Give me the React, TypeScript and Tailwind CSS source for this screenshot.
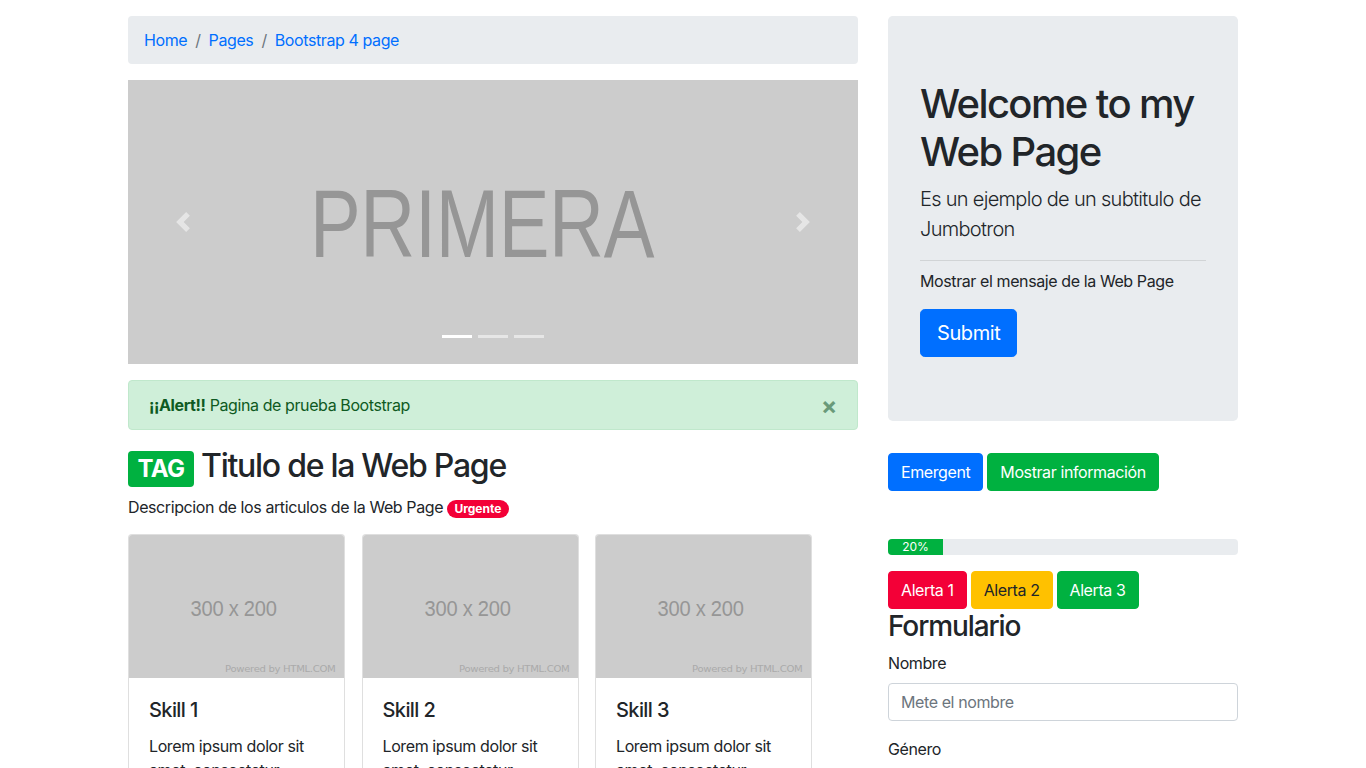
import React from 'react';

const PlaceholderImg = () => (
  <svg viewBox="0 0 300 200" preserveAspectRatio="none" className="block w-[215px] h-[143px]">
    <rect width="300" height="200" fill="#cccccc" />
    <text
      x="146"
      y="113"
      textAnchor="middle"
      fontFamily="'Liberation Sans', Arial, sans-serif"
      fontSize="31"
      fill="#969696"
      textLength="120"
      lengthAdjust="spacingAndGlyphs"
    >
      300 x 200
    </text>
    <text
      x="288"
      y="191"
      textAnchor="end"
      fontFamily="'DejaVu Sans', sans-serif"
      fontSize="12"
      fill="#aaaaaa"
      textLength="154"
      lengthAdjust="spacingAndGlyphs"
    >
      Powered by HTML.COM
    </text>
  </svg>
);

const SkillCard = ({ title }: { title: string }) => (
  <div className="w-[217px] border border-black/[.125] rounded-[4px] overflow-hidden bg-white">
    <PlaceholderImg />
    <div className="p-5">
      <h5 className="text-[20px] font-medium leading-[1.2] mb-3 tracking-[-0.03em]">{title}</h5>
      <p className="text-[16px] leading-6">
        Lorem ipsum dolor sit amet, consectetur adipiscing elit. Quisque vitae.
      </p>
    </div>
  </div>
);

export default function App() {
  return (
    <div className="min-h-screen bg-white text-[#212529] font-['Inter','Noto_Sans',sans-serif] text-[16px] leading-6 tracking-[-0.025em]">
      <div className="mx-auto w-[1140px] px-[15px] pt-4 flex gap-[30px]">
        {/* left column */}
        <div className="w-[730px] shrink-0">
          <nav className="bg-[#e9ecef] rounded-[4px] px-4 py-3 mb-4 flex items-center text-[#006fff]">
            <a>Home</a>
            <span className="px-2 text-[#6c757d]">/</span>
            <a>Pages</a>
            <span className="px-2 text-[#6c757d]">/</span>
            <a>Bootstrap 4 page</a>
          </nav>

          {/* carousel */}
          <div className="relative h-[284px] bg-[#cccccc] mb-4 overflow-hidden">
            <svg viewBox="0 0 730 284" className="block w-full h-full">
              <text
                x="182"
                y="177"
                fontFamily="'Liberation Sans', Arial, sans-serif"
                fontSize="96"
                fill="#969696"
                textLength="344"
                lengthAdjust="spacingAndGlyphs"
              >
                PRIMERA
              </text>
            </svg>
            <div className="absolute left-[45px] top-[132px] w-5 h-5 opacity-50">
              <svg viewBox="0 0 8 8" className="w-5 h-5" fill="#fff">
                <path d="M5.25 0l-4 4 4 4 1.5-1.5L4.25 4l2.5-2.5L5.25 0z" />
              </svg>
            </div>
            <div className="absolute right-[45px] top-[132px] w-5 h-5 opacity-50">
              <svg viewBox="0 0 8 8" className="w-5 h-5" fill="#fff">
                <path d="M2.75 0l-1.5 1.5L3.75 4l-2.5 2.5L2.75 8l4-4-4-4z" />
              </svg>
            </div>
            <div className="absolute left-0 right-0 top-[255px] flex justify-center gap-[6px]">
              <span className="w-[30px] h-[3px] bg-white" />
              <span className="w-[30px] h-[3px] bg-white/50" />
              <span className="w-[30px] h-[3px] bg-white/50" />
            </div>
          </div>

          {/* alert */}
          <div className="relative bg-[#cfefd9] border border-[#c0e8cc] text-[#0e5a22] rounded-[4px] px-5 py-3 mb-4">
            <strong className="font-bold">¡¡Alert!!</strong> Pagina de prueba Bootstrap
            <button className="absolute right-0 top-[1px] px-5 py-3 text-[24px] font-bold leading-none text-[#6a9a7a]">
              ×
            </button>
          </div>

          <h2 className="text-[32px] font-medium leading-[1.2] mb-2 tracking-[-0.04em] pt-[1px]">
            <span className="inline-block bg-[#00b140] text-white text-[24px] font-bold leading-none px-[9.6px] py-[6px] rounded-[4px] tracking-[-0.03em]">
              TAG
            </span>{' '}
            Titulo de la Web Page
          </h2>
          <p className="mb-[15px]">
            Descripcion de los articulos de la Web Page{' '}
            <span className="inline-block bg-[#f30037] text-white text-[12px] font-bold leading-none px-[7.2px] py-[3px] rounded-full tracking-normal">
              Urgente
            </span>
          </p>

          <div className="flex gap-[16.5px]">
            <SkillCard title="Skill 1" />
            <SkillCard title="Skill 2" />
            <SkillCard title="Skill 3" />
          </div>
        </div>

        {/* right column */}
        <div className="w-[350px] shrink-0">
          <div className="bg-[#e9ecef] rounded-[4.8px] px-8 py-16 mb-8">
            <h1 className="text-[40px] font-medium leading-[1.2] mb-2 tracking-[-0.04em]">Welcome to my Web Page</h1>
            <p className="text-[20px] font-light leading-[1.5] mb-4 tracking-[-0.035em]">
              Es un ejemplo de un subtitulo de Jumbotron
            </p>
            <hr className="border-0 border-t border-black/10 mt-4 mb-2" />
            <p className="mb-4">Mostrar el mensaje de la Web Page</p>
            <button className="bg-[#006fff] border border-[#006fff] text-white text-[20px] leading-[1.5] px-4 py-2 rounded-[4.8px]">
              Submit
            </button>
          </div>

          <div className="flex gap-1">
            <button className="bg-[#006fff] border border-[#006fff] text-white px-3 py-[6px] rounded-[4px] leading-6">
              Emergent
            </button>
            <button className="bg-[#00b140] border border-[#00b140] text-white px-3 py-[6px] rounded-[4px] leading-6">
              Mostrar información
            </button>
          </div>

          <div className="mt-12 h-4 bg-[#e9ecef] rounded-[4px] overflow-hidden flex">
            <div className="w-[55px] bg-[#00b140] text-white text-[12px] leading-4 text-center tracking-normal">20%</div>
          </div>

          <div className="mt-4 flex gap-1">
            <button className="bg-[#f30037] border border-[#f30037] text-white px-3 py-[6px] rounded-[4px] leading-6">
              Alerta 1
            </button>
            <button className="bg-[#ffc100] border border-[#ffc100] text-[#212529] px-3 py-[6px] rounded-[4px] leading-6">
              Alerta 2
            </button>
            <button className="bg-[#00b140] border border-[#00b140] text-white px-3 py-[6px] rounded-[4px] leading-6">
              Alerta 3
            </button>
          </div>

          <h3 className="text-[28px] font-medium leading-[1.2] mb-[7px] pt-[1px] tracking-[-0.04em]">Formulario</h3>
          <div className="mb-4">
            <label className="block mb-2">Nombre</label>
            <input
              placeholder="Mete el nombre"
              className="block w-full h-[38px] border border-[#ced4da] rounded-[4px] px-3 text-[#495057] placeholder:text-[#6c757d] bg-white"
            />
          </div>
          <div className="mb-4">
            <label className="block mb-2">Género</label>
            <div className="flex gap-4">
              <label className="flex items-center gap-2">
                <input type="radio" name="genero" /> Masculino
              </label>
              <label className="flex items-center gap-2">
                <input type="radio" name="genero" /> Femenino
              </label>
            </div>
          </div>
        </div>
      </div>
    </div>
  );
}
